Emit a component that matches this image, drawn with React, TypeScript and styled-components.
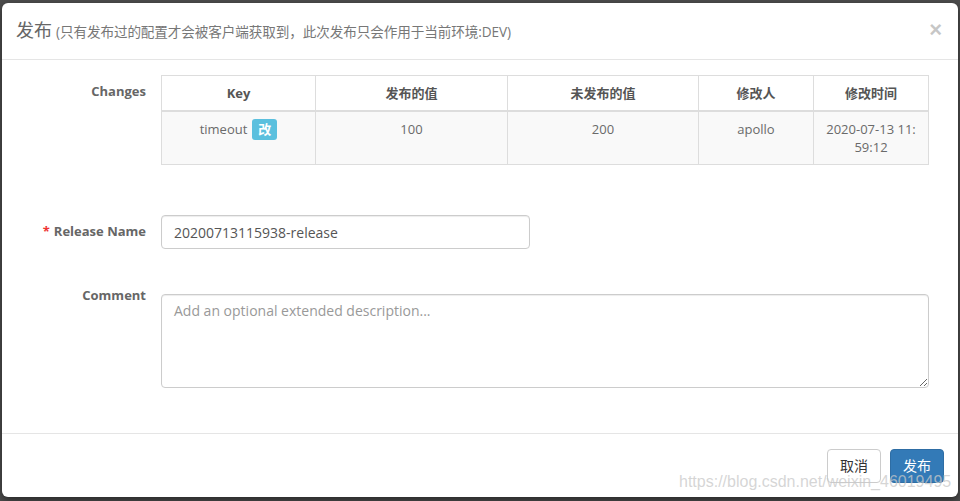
import styled, { createGlobalStyle } from 'styled-components';

const GlobalStyle = createGlobalStyle`
  html, body {
    margin: 0;
    padding: 0;
    background: #4d4d4d;
  }
  * {
    box-sizing: border-box;
  }
`;

const Backdrop = styled.div`
  height: 501px;
  padding: 3px 2px 4px 2px;
  font-family: "Open Sans", "Noto Sans CJK SC", sans-serif;
  overflow: hidden;
`;

const Modal = styled.div`
  position: relative;
  background: #fff;
  border-radius: 6px;
  height: 494px;
  box-shadow: 0 3px 9px rgba(0, 0, 0, 0.5);
  display: flex;
  flex-direction: column;
`;

const Header = styled.div`
  height: 57px;
  padding: 0 15px 0 14px;
  border-bottom: 1px solid #e5e5e5;
  display: flex;
  align-items: center;
  justify-content: space-between;
`;

const Title = styled.h4`
  margin: 0;
  font-size: 18px;
  font-weight: 400;
  color: #666;
  line-height: 24px;

  small {
    font-size: 13.6px;
    letter-spacing: -0.1px;
    color: #777;
    margin-left: 4px;
  }
`;

const Close = styled.button`
  border: none;
  background: none;
  padding: 0;
  font-size: 22px;
  font-weight: 700;
  line-height: 1;
  color: #000;
  opacity: 0.22;
  margin-top: -3px;
  margin-right: 1px;
  cursor: pointer;
  font-family: "Liberation Sans", sans-serif;
`;

const Body = styled.div`
  flex: 1;
  padding: 15px 29px 0 14px;
`;

const FormRow = styled.div<{ $top?: number }>`
  display: grid;
  grid-template-columns: 130px 1fr;
  column-gap: 15px;
  margin-top: ${({ $top }) => $top ?? 0}px;
`;

const Label = styled.label<{ $pad?: number }>`
  text-align: right;
  font-size: 13px;
  font-weight: 700;
  color: #666;
  line-height: 18px;
  padding-top: ${({ $pad }) => $pad ?? 7}px;

  em {
    color: #e33;
    font-style: normal;
    margin-right: 4px;
  }
`;

const Table = styled.table`
  width: 100%;
  border-collapse: collapse;
  table-layout: fixed;
  border: 1px solid #ddd;
  font-size: 13px;
  line-height: 18px;

  th, td {
    border: 1px solid #ddd;
    padding: 8px;
    text-align: center;
    vertical-align: top;
  }

  th {
    color: #555;
    font-weight: 700;
    background: #fff;
    border-bottom-width: 2px;
  }

  td {
    color: #6a6a6a;
    background: #f9f9f9;
  }
`;

const Badge = styled.span`
  display: inline-block;
  margin-left: 5px;
  padding: 2px 6px 2px;
  font-size: 13px;
  line-height: 17px;
  font-weight: 700;
  color: #fff;
  background: #5bc0de;
  border-radius: 3px;
  vertical-align: top;
  margin-top: -1px;
`;

const Input = styled.input`
  width: 369px;
  height: 34px;
  padding: 6px 12px;
  font-size: 14px;
  font-family: inherit;
  color: #555;
  border: 1px solid #ccc;
  border-radius: 4px;
  box-shadow: inset 0 1px 1px rgba(0, 0, 0, 0.075);
  outline: none;
`;

const TextArea = styled.textarea`
  width: 100%;
  height: 94px;
  margin-top: 8px;
  padding: 6px 12px;
  font-size: 14px;
  font-family: inherit;
  line-height: 20px;
  color: #555;
  border: 1px solid #ccc;
  border-radius: 4px;
  box-shadow: inset 0 1px 1px rgba(0, 0, 0, 0.075);
  outline: none;
  display: block;

  &::placeholder {
    color: #999;
  }
`;

const Footer = styled.div`
  border-top: 1px solid #e5e5e5;
  padding: 15px 14px 14px;
  display: flex;
  justify-content: flex-end;
  gap: 9px;
`;

const Button = styled.button<{ $primary?: boolean }>`
  height: 34px;
  padding: 6px 12px;
  font-size: 14px;
  line-height: 20px;
  font-family: inherit;
  border-radius: 4px;
  border: 1px solid ${({ $primary }) => ($primary ? '#2e6da4' : '#ccc')};
  background: ${({ $primary }) => ($primary ? '#337ab7' : '#fff')};
  color: ${({ $primary }) => ($primary ? '#fff' : '#333')};
  cursor: pointer;
`;

const Watermark = styled.div`
  position: absolute;
  left: 677px;
  top: 470px;
  font-family: "Liberation Sans", Arial, sans-serif;
  font-size: 16px;
  line-height: 18px;
  color: rgba(200, 200, 200, 0.75);
  pointer-events: none;
  white-space: nowrap;
`;

const changes = [
  { key: 'timeout', released: '100', pending: '200', modifier: 'apollo', time: '2020-07-13 11:', time2: '59:12' },
];

export default function App() {
  return (
    <>
      <GlobalStyle />
      <Backdrop>
        <Modal>
          <Header>
            <Title>
              发布<small>(只有发布过的配置才会被客户端获取到，此次发布只会作用于当前环境:DEV)</small>
            </Title>
            <Close>×</Close>
          </Header>

          <Body>
            <FormRow>
              <Label>Changes</Label>
              <Table>
                <colgroup>
                  <col style={{ width: 154 }} />
                  <col style={{ width: 192 }} />
                  <col style={{ width: 191 }} />
                  <col style={{ width: 115 }} />
                  <col />
                </colgroup>
                <thead>
                  <tr>
                    <th>Key</th>
                    <th>发布的值</th>
                    <th>未发布的值</th>
                    <th>修改人</th>
                    <th>修改时间</th>
                  </tr>
                </thead>
                <tbody>
                  {changes.map((c) => (
                    <tr key={c.key}>
                      <td>
                        {c.key}
                        <Badge>改</Badge>
                      </td>
                      <td>{c.released}</td>
                      <td>{c.pending}</td>
                      <td>{c.modifier}</td>
                      <td>
                        {c.time}
                        <br />
                        {c.time2}
                      </td>
                    </tr>
                  ))}
                </tbody>
              </Table>
            </FormRow>

            <FormRow $top={50}>
              <Label>
                <em>*</em>Release Name
              </Label>
              <div>
                <Input defaultValue="20200713115938-release" />
              </div>
            </FormRow>

            <FormRow $top={37}>
              <Label $pad={0}>Comment</Label>
              <TextArea placeholder="Add an optional extended description..." />
            </FormRow>
          </Body>

          <Footer>
            <Button>取消</Button>
            <Button $primary>发布</Button>
          </Footer>

          <Watermark>https://blog.csdn.net/weixin_46019495</Watermark>
        </Modal>
      </Backdrop>
    </>
  );
}
